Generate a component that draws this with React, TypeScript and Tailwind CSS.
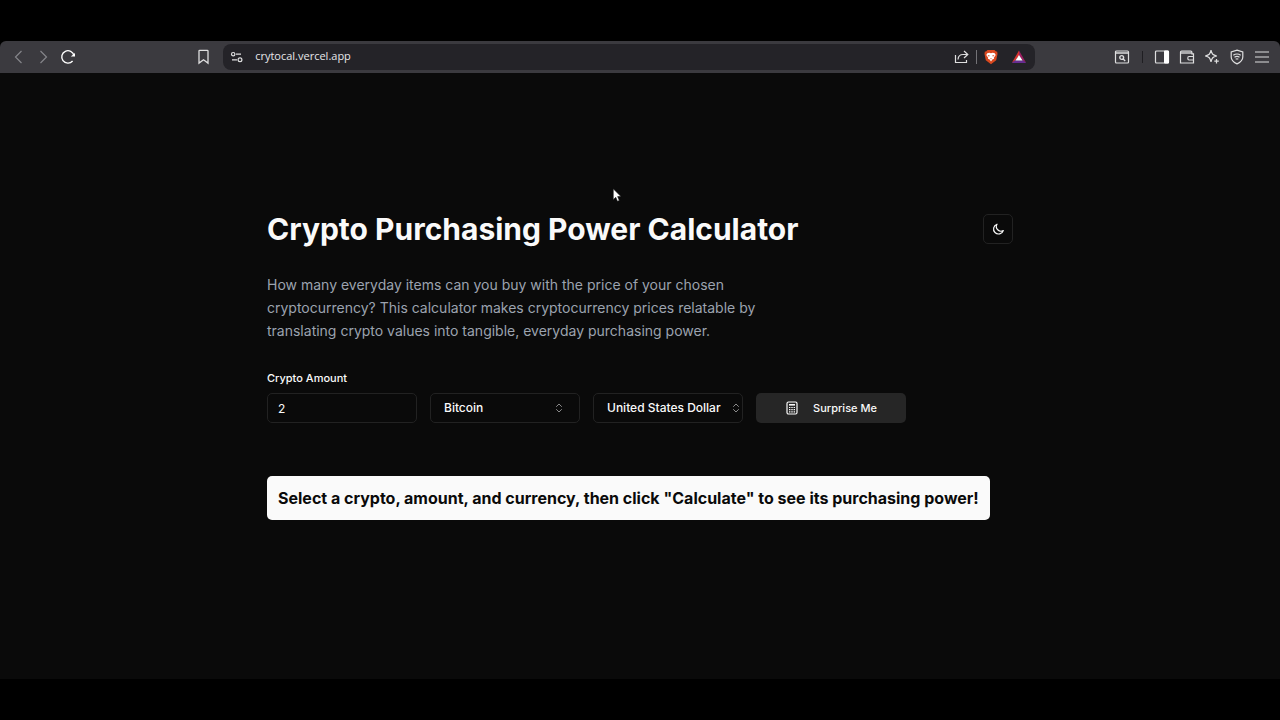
import type { ReactNode } from 'react';
import { ChevronsUpDown } from 'lucide-react';

const cryptos = ['Bitcoin', 'Ethereum', 'Solana'];
const currencies = ['United States Dollar', 'Euro', 'British Pound'];

function ToolbarButton({ label, children }: { label: string; children: ReactNode }) {
  return (
    <button type="button" aria-label={label} className="flex size-4 shrink-0 items-center justify-center">
      <svg viewBox="0 0 16 16" className="size-4" fill="none" stroke="currentColor" strokeWidth="1.2">
        {children}
      </svg>
    </button>
  );
}

function BrowserBar() {
  return (
    <div className="flex h-8 items-center rounded-t-md bg-[#3b3a3f] px-2.5 pb-px text-[#dededf]">
      <div className="flex items-center gap-[9px] text-[#85858a]">
        <ToolbarButton label="Back">
          <path d="M11.5 2 5.5 8l6 6" />
        </ToolbarButton>
        <ToolbarButton label="Forward">
          <path d="m5.5 2 6 6-6 6" />
        </ToolbarButton>
        <span className="flex text-white">
          <ToolbarButton label="Reload">
            <path d="M12.6 12A6.200 6.200 0 1 1 14 6.500" strokeWidth="1.4" />
            <path d="M10.800 7.400h4.200V4z" fill="currentColor" stroke="none" />
          </ToolbarButton>
        </span>
      </div>
      <div className="flex-[3]" />
      <ToolbarButton label="Bookmark this page">
        <path d="M4 2.100q0-.7.700-.7h7.600q.7 0 .7.700v12L8.500 10.800 4 14.100z" strokeWidth="1.3" />
      </ToolbarButton>
      <div className="ml-3 flex h-[26px] w-[64.4%] items-center rounded-lg bg-[#242328] pr-2 pl-1.5">
        <ToolbarButton label="Site information">
          <circle cx="4.2" cy="5.2" r="1.7" />
          <path d="M7 5.2h5M3 10.8h5" />
          <circle cx="11" cy="10.8" r="1.9" />
        </ToolbarButton>
        <input
          aria-label="Address"
          defaultValue="crytocal.vercel.app"
          className="ml-2.5 min-w-0 flex-1 bg-transparent font-['Open_Sans',sans-serif] text-[11px] text-[#e6e6e8] outline-none"
        />
        <ToolbarButton label="Share">
          <path d="M1.500 6v7.500h11V11M4 10.500c.3-3.700 2.500-5 5-5h4M10 2l3.800 3.500L10 9" />
        </ToolbarButton>
        <span className="mx-1.5 h-3.5 w-px bg-[#737277]" />
        <button type="button" aria-label="Brave Shields">
          <svg viewBox="0 0 16 16" className="size-4">
            <path d="M4.500 1h7l1.200 1.300 1.500.4.300 2.300-1.300 6.300L8 15.200l-5.200-3.900L1.500 5l.3-2.300 1.500-.4z" fill="#d9481f" />
            <path d="m4.300 4.200 2-.4L8 4.200l1.700-.4 2 .4 1 1.800-1.900 2.800.3 1-1.800.8L8 12.500l-1.300-1.900-1.800-.8.3-1L3.300 6z" fill="#fff" />
            <path d="m4.500 6 2.300.6-.8 1.200zM11.500 6l-2.300.6.8 1.200zM7.200 9.300h1.600L8 10.500z" fill="#d9481f" />
          </svg>
        </button>
        <button type="button" aria-label="Brave Rewards" className="ml-3">
          <svg viewBox="0 0 16 16" className="size-4">
            <path d="M8 1.500v5L4.200 11.500.8 14z" fill="#d8342f" />
            <path d="M8 1.500v5l3.800 5 3.400 2.500z" fill="#9e1f63" />
            <path d="M.8 14h14.400l-3.400-2.800H4.200z" fill="#662d91" />
            <path d="m8 6 3.600 5.600H4.400z" fill="#fff" />
          </svg>
        </button>
      </div>
      <div className="flex-[2]" />
      <div className="flex items-center gap-[9px]">
        <ToolbarButton label="Search tabs">
          <rect x="1.5" y="2" width="13" height="12" rx="1" />
          <path d="M1.5 4h13" strokeWidth="1.5" />
          <circle cx="7.7" cy="8.5" r="1.9" strokeWidth="1.4" />
          <path d="m9 9.8 2.200 2.200" strokeWidth="1.4" />
        </ToolbarButton>
        <span className="mr-0.5 ml-[3px] h-3 w-px bg-[#1f1e22]" />
        <ToolbarButton label="Sidebar">
          <rect x="1.5" y="2" width="13" height="12" rx="1" />
          <path d="M10.500 2h4v12h-4z" fill="#fff" stroke="#fff" strokeWidth="1" />
        </ToolbarButton>
        <ToolbarButton label="Wallet">
          <path d="M1.500 3.200q0-1.200 1.200-1.200h9q1.200 0 1.200 1.200v1.600h1.600V14h-13z" />
          <path d="M1.500 3.700h11.400" strokeWidth="2.5" opacity=".7" />
          <path d="M14.500 7.500H10q-1.200 0-1.200 1.700T10 11h4.500" />
        </ToolbarButton>
        <ToolbarButton label="Leo AI">
          <path d="M7 1.200c.9 4 1.800 4.900 5.800 5.800-4 .9-4.900 1.800-5.800 5.800C6.100 8.800 5.200 7.900 1.200 7 5.200 6.100 6.100 5.200 7 1.200z" />
          <path d="M12.500 10v4.500M10.300 12.200h4.500" />
        </ToolbarButton>
        <ToolbarButton label="VPN">
          <path d="m8 1.200 5.800 1.700v5c0 3.200-2.600 5.400-5.800 7-3.200-1.600-5.800-3.800-5.800-7v-5z" />
          <path d="M4.300 6.300q3.700-2.600 7.400 0M5.500 8.300q2.500-1.700 5 0M6.700 10.200q1.300-.9 2.600 0" />
        </ToolbarButton>
        <ToolbarButton label="Menu">
          <path d="M1 3h14M1 8h14M1 13h14" />
        </ToolbarButton>
      </div>
    </div>
  );
}

function Picker({ label, options, iconClass }: { label: string; options: string[]; iconClass: string }) {
  return (
    <div className="grid h-[30px] w-[150px] items-center rounded-[5px] border border-[#222222]">
      <select
        aria-label={label}
        className="col-start-1 row-start-1 h-full w-full appearance-none bg-transparent pl-[13px] text-xs font-medium outline-none"
      >
        {options.map((option) => (
          <option key={option} className="bg-[#0a0a0a]">
            {option}
          </option>
        ))}
      </select>
      <ChevronsUpDown className={`pointer-events-none col-start-1 row-start-1 size-3 justify-self-end text-[#8a8a8a] ${iconClass}`} />
    </div>
  );
}

function CalculatorIcon() {
  return (
    <svg viewBox="0 0 14 14" className="size-3.5" fill="none" stroke="currentColor">
      <rect x="2" y="1" width="10" height="12" rx="1.5" strokeWidth="1.2" />
      <path d="M4 3.8h6" strokeWidth="1.6" />
      <path d="M4 6.500h6M4 8.700h6M4 10.900h6" strokeWidth="1.2" strokeDasharray="1.4 .9" />
    </svg>
  );
}

function MoonIcon() {
  return (
    <svg viewBox="0 0 14 14" className="size-3.5" fill="none" stroke="currentColor" strokeWidth="1.2" strokeLinejoin="round">
      <path d="M6 2.200A5 5 0 1 0 12.300 8.500 4.600 4.600 0 0 1 6 2.200z" />
    </svg>
  );
}

export default function App() {
  return (
    <div className="flex min-h-screen flex-col bg-black py-[41px] font-['Inter',sans-serif] text-[#fafafa]">
      <BrowserBar />
      <main className="flex-1 bg-[#0a0a0a] px-6 pt-[141px]">
        <div className="mx-auto max-w-[746px]">
          <div className="flex items-center justify-between">
            <h1 className="text-[30px] leading-[30px] font-bold">Crypto Purchasing Power Calculator</h1>
            <button
              type="button"
              aria-label="Toggle theme"
              className="flex size-[30px] shrink-0 items-center justify-center rounded-[5px] border border-[#222222]"
            >
              <MoonIcon />
            </button>
          </div>
          <p className="mt-[29px] max-w-[505px] text-sm leading-[23px] text-[#9ca3af]">
            How many everyday items can you buy with the price of your chosen cryptocurrency? This calculator makes
            cryptocurrency prices relatable by translating crypto values into tangible, everyday purchasing power.
          </p>
          <form className="mt-7">
            <label htmlFor="amount" className="block text-[11px] leading-4 font-medium">
              Crypto Amount
            </label>
            <div className="mt-[7px] flex flex-wrap gap-[13px]">
              <input
                id="amount"
                inputMode="decimal"
                defaultValue="2"
                className="h-[30px] w-[150px] rounded-[5px] border border-[#222222] bg-transparent px-2.5 text-xs outline-none"
              />
              <Picker label="Cryptocurrency" options={cryptos} iconClass="mr-3.5" />
              <Picker label="Currency" options={currencies} iconClass="mr-0" />
              <button
                type="button"
                className="flex h-[30px] w-[150px] items-center justify-center gap-3.5 rounded-[5px] bg-[#262626] text-[11px] font-medium"
              >
                <CalculatorIcon />
                Surprise Me
              </button>
            </div>
          </form>
          <p className="mt-[53px] w-fit rounded-[5px] bg-[#fafafa] px-[11px] py-2.5 text-base leading-6 font-bold text-[#0a0a0a]">
            Select a crypto, amount, and currency, then click "Calculate" to see its purchasing power!
          </p>
        </div>
      </main>
      <svg viewBox="0 0 12 18" className="pointer-events-none absolute top-[188px] left-[612px] h-[15px] w-2.5">
        <path d="M1.500 1v13l3-2.800 2 4.800 2.300-1-2-4.700h4z" fill="#fff" stroke="#111" strokeWidth=".7" />
      </svg>
    </div>
  );
}
